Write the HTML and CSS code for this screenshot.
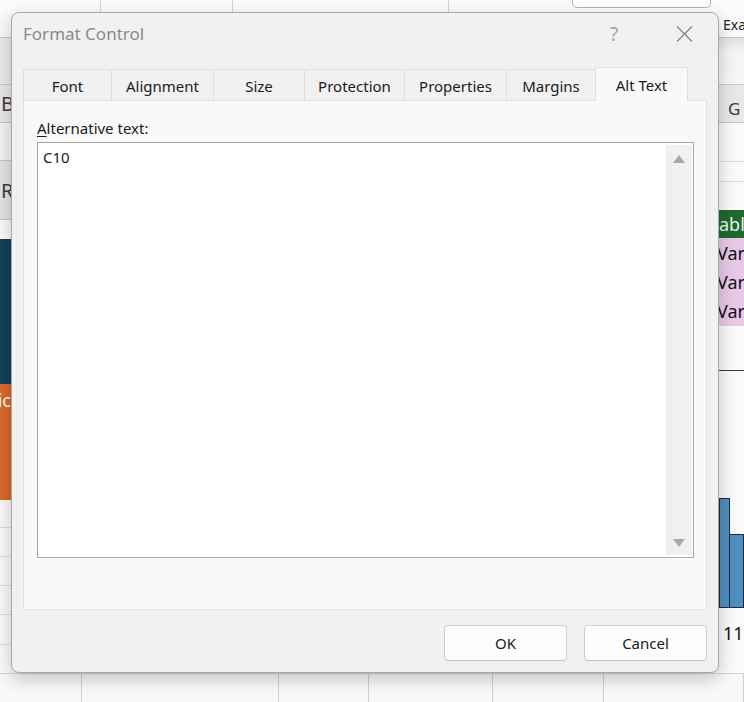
FILE: index.html
```html
<!DOCTYPE html>
<html lang="en">
<head>
  <meta charset="UTF-8" />
  <title>Format Control</title>
  <link rel="stylesheet" href="styles.css">
</head>
<body>
  <div class="screen">

    <!-- sheet behind the dialog -->
    <div class="sheet-top">
      <div class="cell w101"></div>
      <div class="cell w132"></div>
      <div class="cell w216"></div>
      <div class="cell last"><div class="ribbon-btn"></div></div>
    </div>

    <div class="side side-left">
      <div class="row r26 white line"></div>
      <div class="row r47 grey line"></div>
      <div class="row r38 grey2 line"><span class="hdr">B</span></div>
      <div class="row r38 light line"></div>
      <div class="row r59 grey3 line"><span class="hdr">R</span></div>
      <div class="row r19 white"></div>
      <div class="row r145 teal"></div>
      <div class="row r116 orange"><span class="cut">ic</span></div>
      <div class="row r28 white grid"></div>
      <div class="row r29 white grid"></div>
      <div class="row r29 white grid"></div>
      <div class="row r29 white grid"></div>
      <div class="row r30 white grid"></div>
      <div class="row r28 white"></div>
    </div>

    <div class="dialog">
      <div class="titlebar">
        <span class="title">Format Control</span>
        <span class="help">?</span>
        <span class="close">
          <svg width="17" height="16" viewBox="0 0 17 16"><path d="M1 0.5L16 15.5M16 0.5L1 15.5" stroke="#858585" stroke-width="1.3" fill="none"/></svg>
        </span>
      </div>

      <div class="tabs">
        <div class="tab t-font">Font</div>
        <div class="tab t-align">Alignment</div>
        <div class="tab t-size">Size</div>
        <div class="tab t-prot">Protection</div>
        <div class="tab t-props">Properties</div>
        <div class="tab t-margins">Margins</div>
        <div class="tab t-alt active">Alt Text</div>
      </div>

      <div class="panel">
        <label class="field-label"><u>A</u>lternative text:</label>
        <div class="textbox">
          <div class="textbox-text">C10</div>
          <div class="scrollbar">
            <span class="arrow up"></span>
            <span class="arrow down"></span>
          </div>
        </div>
      </div>

      <div class="actions">
        <button class="btn">OK</button>
        <button class="btn">Cancel</button>
      </div>
    </div>

    <div class="side side-right">
      <div class="row r26 white line"><span class="txt-exa">Exa</span></div>
      <div class="row r47 fade line"></div>
      <div class="row r38 grey2 line"><span class="hdr-g">G</span></div>
      <div class="row r39 white line2"></div>
      <div class="row r20 white line2"></div>
      <div class="row r28 white"></div>
      <div class="row r28 green"><span class="cell-txt light-txt">abl</span></div>
      <div class="row r88 pink">
        <span class="var">Var</span>
        <span class="var">Var</span>
        <span class="var">Var</span>
      </div>
      <div class="row r45 white axis"></div>
      <div class="chart">
        <div class="bar bar-1"></div>
        <div class="bar bar-2"></div>
      </div>
      <div class="row r65 white"><span class="tick">11</span></div>
    </div>

    <div class="sheet-bottom">
      <div class="cell b81"></div>
      <div class="cell b197"></div>
      <div class="cell b90"></div>
      <div class="cell b124"></div>
      <div class="cell b111"></div>
      <div class="cell last"></div>
    </div>

  </div>
</body>
</html>
```

FILE: styles.css
```css
body {
  margin: 0;
  font-family: "Noto Sans", "DejaVu Sans", sans-serif;
  color: #1a1a1a;
  background: #fafafa;
}
.screen {
  width: 744px;
  height: 702px;
  overflow: hidden;
  display: grid;
  grid-template-columns: 11px 708px 25px;
  grid-template-rows: 12px 661px 29px;
}

/* sheet pieces around the dialog */
.sheet-top {
  grid-column: 1 / -1;
  display: flex;
  background: #fbfbfb;
}
.sheet-top .cell {
  box-sizing: border-box;
  height: 12px;
  border-right: 1px solid #d6d6d6;
}
.w101 { width: 101px; }
.w132 { width: 132px; }
.w216 { width: 216px; }
.cell.last {
  flex: 1;
  border-right: none;
}
.ribbon-btn {
  margin-left: 123px;
  width: 139px;
  height: 8px;
  box-sizing: border-box;
  border: 1px solid #b4b4b4;
  border-top: none;
  border-radius: 0 0 5px 5px;
  background: #fff;
}

.side {
  display: flex;
  flex-direction: column;
  overflow: hidden;
  font-size: 18px;
  white-space: nowrap;
}
.row {
  box-sizing: border-box;
  flex: none;
  display: flex;
  align-items: center;
  overflow: hidden;
}
.r19 { height: 19px; }
.r20 { height: 20px; }
.r26 { height: 26px; }
.r28 { height: 28px; }
.r29 { height: 29px; }
.r30 { height: 30px; }
.r38 { height: 38px; }
.r39 { height: 39px; }
.r45 { height: 45px; }
.r47 { height: 47px; }
.r59 { height: 59px; }
.r65 { height: 65px; }
.r88 { height: 88px; }
.r116 { height: 116px; }
.r145 { height: 145px; }

.white { background: #fafafa; }
.grey { background: #ebebeb; }
.grey2 { background: #e8e8e8; }
.grey3 { background: #e4e4e4; }
.light { background: #f3f3f3; }
.fade { background: linear-gradient(#e2e2e2, #f4f4f4 30%, #f6f6f6); }
.line { border-bottom: 1px solid #c6c6c6; }
.line2 { border-bottom: 1px solid #dadada; }
.grid { border-bottom: 1px solid #d9d9d9; }
.teal { background: #143f56; }
.orange {
  background: #d9692b;
  align-items: flex-start;
  justify-content: flex-end;
  color: #fff;
}
.cut { margin-top: 4px; }
.hdr {
  color: #3c3c3c;
  padding-left: 1px;
  font-size: 20px;
}
.txt-exa {
  font-size: 14px;
  padding-left: 4px;
  color: #222;
}
.hdr-g {
  color: #3a3a3a;
  padding-left: 9px;
  font-size: 17px;
  padding-top: 10px;
}
.green {
  background: #1d6a2c;
  color: #f2f2f2;
}
.cell-txt { padding-left: 0; }
.pink {
  background: #e8c9e7;
  flex-direction: column;
  align-items: flex-start;
  justify-content: space-around;
}
.var {
  margin-left: -2px;
  color: #111;
}
.axis { border-bottom: 1px solid #3a3a3a; }
.chart {
  flex: none;
  height: 237px;
  display: flex;
  align-items: flex-end;
  background: #fafafa;
}
.bar {
  box-sizing: border-box;
  background: #4f8fc0;
  border: 1px solid #1b2b3a;
}
.bar-1 {
  width: 11px;
  height: 110px;
}
.bar-2 {
  flex: 1;
  height: 74px;
  border-left: none;
}
.tick {
  align-self: flex-start;
  margin-top: 13px;
  padding-left: 4px;
  color: #111;
}

.sheet-bottom {
  grid-column: 1 / -1;
  display: flex;
  background: #f9f9f9;
  border-top: 1px solid #d6d6d6;
}
.sheet-bottom .cell {
  box-sizing: border-box;
  border-right: 1px solid #d2d2d2;
}
.b81 { width: 82px; }
.b197 { width: 197px; }
.b90 { width: 90px; }
.b124 { width: 124px; }
.b111 { width: 111px; }

/* dialog */
.dialog {
  position: relative;
  z-index: 2;
  box-sizing: border-box;
  display: flex;
  flex-direction: column;
  background: #f1f1f1;
  border: 1px solid #a9a9a9;
  border-radius: 8px;
  box-shadow: 0 6px 18px rgba(0, 0, 0, 0.22);
}
.titlebar {
  height: 42px;
  display: flex;
  align-items: center;
  padding: 0 11px;
}
.title {
  flex: 1;
  font-size: 17px;
  color: #8a8a8a;
  margin-top: -2px;
}
.help {
  width: 46px;
  text-align: center;
  margin-right: 24px;
  font-size: 19px;
  color: #a3a3a3;
}
.close {
  width: 46px;
  display: flex;
  justify-content: center;
}

.tabs {
  margin-top: 12px;
  padding: 0 11px;
  display: flex;
  align-items: flex-end;
}
.tab {
  box-sizing: border-box;
  height: 31px;
  display: flex;
  align-items: center;
  justify-content: center;
  padding-top: 2px;
  font-size: 15px;
  border: 1px solid #e0e0e0;
  border-right: none;
  border-bottom: none;
}
.t-font { width: 88px; }
.t-align { width: 102px; }
.t-size { width: 91px; }
.t-prot { width: 100px; }
.t-props { width: 102px; }
.t-margins { width: 89px; }
.t-alt { width: 93px; }
.tab.active {
  height: 34px;
  margin-bottom: -1px;
  background: #f9f9f9;
  border-right: 1px solid #e0e0e0;
  position: relative;
  z-index: 1;
  padding-top: 0;
}

.panel {
  box-sizing: border-box;
  height: 510px;
  margin: 0 11px;
  padding: 17px 13px 0;
  background: #f9f9f9;
  border: 1px solid #e2e2e2;
}
.field-label {
  display: block;
  font-size: 15px;
  line-height: 20px;
  margin-bottom: 4px;
}
.field-label u {
  text-underline-offset: 2px;
}
.textbox {
  box-sizing: border-box;
  width: 657px;
  height: 416px;
  display: flex;
  background: #fff;
  border: 1px solid #a7a7a7;
}
.textbox-text {
  flex: 1;
  padding: 4px 5px;
  font-size: 15px;
  line-height: 20px;
}
.scrollbar {
  width: 26px;
  margin: 2px 1px 2px 0;
  background: #f0f0f0;
  display: flex;
  flex-direction: column;
  align-items: center;
  justify-content: space-between;
  padding: 10px 0 8px;
}
.arrow {
  width: 0;
  height: 0;
  border-left: 6px solid transparent;
  border-right: 6px solid transparent;
}
.arrow.up { border-bottom: 8px solid #a8a8a8; }
.arrow.down { border-top: 8px solid #a8a8a8; }

.actions {
  display: flex;
  justify-content: flex-end;
  gap: 17px;
  margin-top: 15px;
  padding: 0 11px;
}
.btn {
  width: 123px;
  height: 36px;
  font-family: inherit;
  font-size: 15px;
  color: #1a1a1a;
  background: #fdfdfd;
  border: 1px solid #cfcfcf;
  border-bottom-color: #c2c2c2;
  border-radius: 4px;
}
```
